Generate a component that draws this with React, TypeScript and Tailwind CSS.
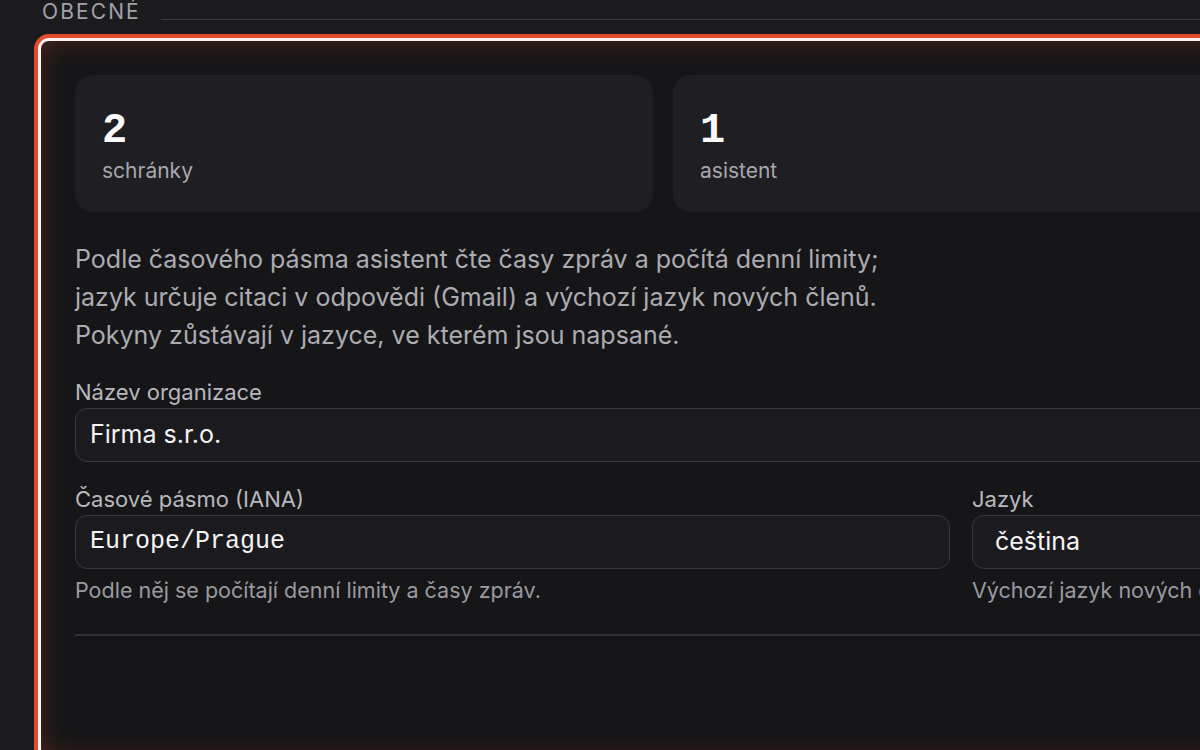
export default function App() {
  return (
    <div className="h-[750px] w-[1200px] overflow-hidden bg-[#1b1b1e] font-['Inter','Noto_Sans',sans-serif]">
      <div className="flex items-end gap-[20px] pl-[42px] h-[24px] mb-[10px]">
        <h3 className="text-[21px] leading-[24px] tracking-[0.1em] text-[#a1a1aa] uppercase">Obecné</h3>
        <div className="h-px w-[1100px] bg-[#3a3a40] mb-[4px]" />
      </div>

      <div className="ml-[34px] w-[1258px] rounded-[15px] bg-[#e34b2c] p-[4px]">
        <div className="rounded-[11px] border-[3px] border-[#fff4f0] bg-[#161618] p-[34px] pb-[120px] shadow-[inset_0_0_26px_rgba(227,75,44,0.26)]">
          <div className="grid grid-cols-2 gap-[20px]">
            <StatCard value="2" label="schránky" />
            <StatCard value="1" label="asistent" />
          </div>

          <p className="mt-[28px] text-[25px] leading-[38px] text-[#acacb2]">
            Podle časového pásma asistent čte časy zpráv a počítá denní limity;
            <br />
            jazyk určuje citaci v odpovědi (Gmail) a výchozí jazyk nových členů.
            <br />
            Pokyny zůstávají v jazyce, ve kterém jsou napsané.
          </p>

          <div className="mt-[24px] flex flex-col">
            <label className="text-[22px] leading-[28px] text-[#b8b8be] mb-[2px]">Název organizace</label>
            <div className="h-[54px] rounded-[12px] border border-[#38383e] bg-[#1b1b1f] px-[14px] flex items-center text-[25px] text-[#f4f4f5]">
              Firma s.r.o.
            </div>
          </div>

          <div className="mt-[23px] grid grid-cols-[875px_279px] gap-[22px]">
            <div className="flex flex-col">
              <label className="text-[22px] leading-[28px] text-[#b8b8be] mb-[2px]">Časové pásmo (IANA)</label>
              <div className="h-[54px] rounded-[12px] border border-[#38383e] bg-[#1b1b1f] px-[14px] flex items-center font-['Liberation_Mono',monospace] text-[25px] text-[#f4f4f5]">
                Europe/Prague
              </div>
              <span className="mt-[7px] text-[21.5px] leading-[28px] text-[#9a9aa1]">
                Podle něj se počítají denní limity a časy zpráv.
              </span>
            </div>
            <div className="flex flex-col">
              <label className="text-[22px] leading-[28px] text-[#b8b8be] mb-[2px]">Jazyk</label>
              <div className="h-[54px] rounded-[12px] border border-[#38383e] bg-[#1b1b1f] px-[22px] flex items-center text-[25px] text-[#f4f4f5]">
                čeština
              </div>
              <span className="mt-[7px] whitespace-nowrap text-[21.5px] leading-[28px] text-[#9a9aa1]">
                Výchozí jazyk nových členů.
              </span>
            </div>
          </div>

          <div className="mt-[30px] h-[2px] bg-[#2f2f34]" />
        </div>
      </div>
    </div>
  );
}

function StatCard({ value, label }: { value: string; label: string }) {
  return (
    <div className="h-[137px] rounded-[18px] bg-[#1f1e23] px-[27px] pt-[34px]">
      <div className="font-['Liberation_Mono',monospace] text-[42px] leading-[45px] font-bold text-[#fafafa]">{value}</div>
      <div className="text-[21px] leading-[33px] text-[#a8a8ae]">{label}</div>
    </div>
  );
}
